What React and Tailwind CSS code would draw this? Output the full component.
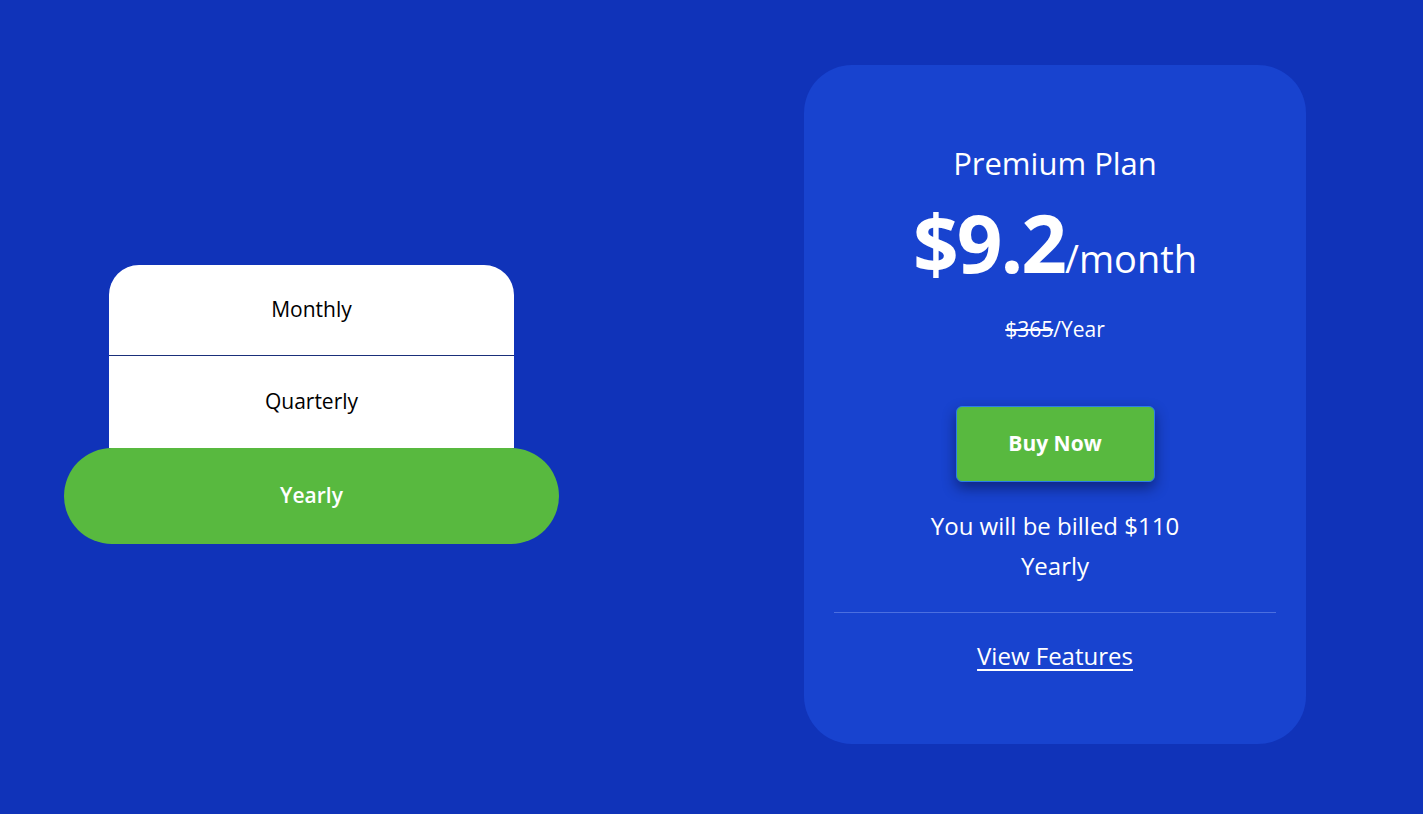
import React, { useState } from 'react';

const plans = [
  { id: 'monthly', label: 'Monthly' },
  { id: 'quarterly', label: 'Quarterly' },
];

export default function App() {
  const [selected, setSelected] = useState('yearly');

  return (
    <div
      className="min-h-screen w-full bg-[#1033b9] flex items-center pl-[64px] gap-[245px] pb-[5px]"
      style={{ fontFamily: '"Open Sans", "Noto Sans", sans-serif' }}
    >
      {/* Billing period picker */}
      <div className="w-[495px] flex flex-col items-center">
        <div className="w-[405px] bg-white rounded-t-[30px] overflow-hidden">
          {plans.map((p, i) => (
            <button
              key={p.id}
              onClick={() => setSelected(p.id)}
              className={`w-full flex items-center justify-center text-[21px] font-medium text-black ${
                i === 0 ? 'h-[91px] border-b border-[#1a2f7a]' : 'h-[92px]'
              }`}
            >
              {p.label}
            </button>
          ))}
        </div>
        <button
          onClick={() => setSelected('yearly')}
          className="w-full h-[96px] rounded-full bg-[#58b93f] flex items-center justify-center text-[21px] font-semibold text-white"
        >
          Yearly
        </button>
      </div>

      {/* Price card */}
      <div className="w-[502px] h-[679px] rounded-[48px] bg-[#1843cf] flex flex-col items-center px-[30px] pt-[78px] text-white font-medium">
        <h2 className="text-[31px] leading-[40px]">Premium Plan</h2>
        <div className="mt-[14px] flex items-baseline">
          <span className="text-[80px] leading-[90px] font-bold tracking-tight">$9.2</span>
          <span className="text-[38px]">/month</span>
        </div>
        <p className="mt-[27px] text-[21px]">
          <span className="line-through">$365</span>/Year
        </p>
        <button className="mt-[60px] w-[199px] h-[76px] rounded-[6px] bg-[#58b93f] border border-[#2b7de8] shadow-[0_6px_14px_rgba(0,0,30,0.45)] text-[21px] font-bold">
          Buy Now
        </button>
        <p className="mt-[24px] text-[24px] leading-[40px] text-center">
          You will be billed $110
          <br />
          Yearly
        </p>
        <div className="mt-[26px] w-full h-px bg-[#4b6fe0]" />
        <a href="#" className="mt-[25px] text-[24px] underline underline-offset-4">
          View Features
        </a>
      </div>
    </div>
  );
}
